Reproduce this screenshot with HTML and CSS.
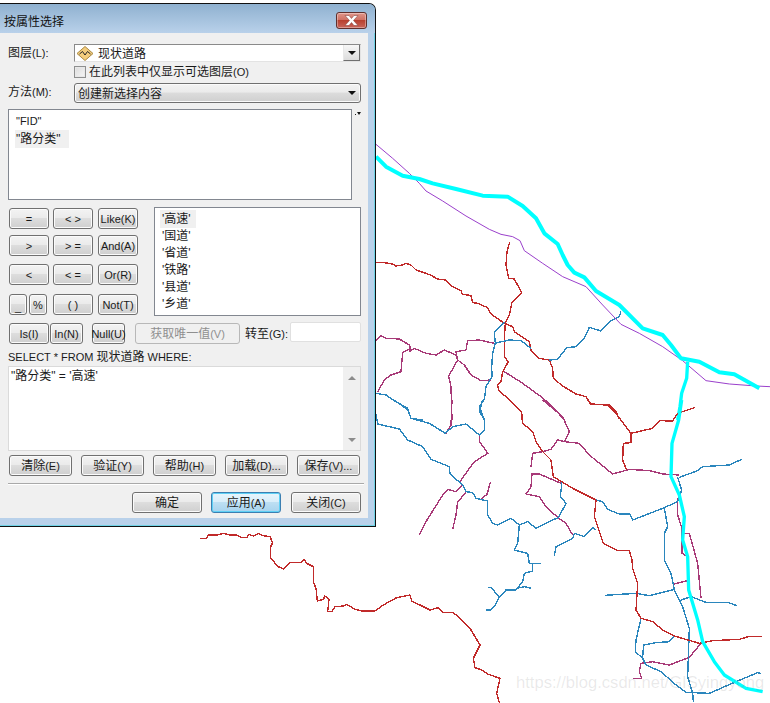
FILE: index.html
```html
<!DOCTYPE html>
<html lang="zh">
<head>
<meta charset="utf-8">
<title>按属性选择</title>
<link rel="stylesheet" href="styles.css">
</head>
<body>
<svg class="map" width="770" height="703" viewBox="0 0 770 703" xmlns="http://www.w3.org/2000/svg">
  <g transform="translate(376 130) scale(.33333)" fill="none" stroke-linejoin="round">
    <g class="red">
      <polyline points="0,398 20,397 50,402 60,408 80,405 90,400 105,405 120,420 150,430 165,436 185,447 210,450 225,468 255,482 258,492 285,497 290,518 305,520 335,533 345,552 385,580 410,590 415,605 460,635 465,660 488,685 520,690 530,715 532,745 560,768 600,792 630,800 645,822 700,825 720,845 730,868"/>
      <polyline points="401,337 393,365 390,405 398,445 415,447 437,488 407,520 400,555 388,580 385,625 385,680 397,695 380,725 375,755 365,765 368,780 405,815 437,848 437,870"/>
    </g>
    <g class="mag">
      <polyline points="0,632 15,618 30,625 70,627 100,645 105,660 100,665 115,655 150,670 180,675 205,660 240,675 245,690 265,705 285,735 315,752 345,750"/>
      <polyline points="105,655 80,668 75,725 45,735 25,750 5,785"/>
      <polyline points="245,690 240,665 270,660 275,632 310,630 355,640"/>
      <polyline points="245,690 218,738 225,770 228,870"/>
      <polyline points="385,725 440,760 495,800 530,830 565,870"/>
    </g>
    <g class="blue">
      <polyline points="385,575 355,608 358,640 350,670 347,710 348,740 330,770 325,808 310,830 325,870"/>
      <polyline points="355,640 400,630 435,632 465,655"/>
      <polyline points="520,690 545,688 572,653 600,650 625,625 640,592 675,603 700,575 730,560 735,545"/>
      <polyline points="0,790 30,795 60,815 95,835 105,865 140,870"/>
      <polyline points="0,855 0,870"/>
    </g>
    <polyline class="pur" points="0,43 50,85 100,130 130,160 150,183 200,213 270,258 340,298 375,313 410,320 432,332 445,362 500,400 560,440 630,470 680,525 735,583 790,610 860,650 920,692 990,752 1060,762 1140,768 1182,770"/>
    <polyline class="cyan" points="0,80 30,110 80,137 130,147 170,160 240,177 320,197 395,200 440,228 480,265 505,310 545,342 560,375 575,405 595,428 625,442 660,483 730,525 800,595 860,615 885,645 915,685 970,695 1030,727 1075,733 1150,775"/>
    <polyline class="cyan thin" points="935,695 932,745 917,790 912,830 905,870"/>
  </g>
  <g transform="translate(376 400) scale(.33333)" fill="none" stroke-linejoin="round">
    <g class="mag">
      <polyline points="228,0 225,75 210,100"/>
      <polyline points="500,0 560,50 580,95 565,125 545,120 525,148 500,155 470,160 465,200"/>
      <polyline points="565,125 610,130 640,165 710,222 760,208 820,212 860,222 910,225"/>
      <polyline points="555,250 490,222 468,222 465,260 450,282 490,290 510,320 548,355 570,370 590,405"/>
      <polyline points="310,105 310,125 336,160 295,185 250,247"/>
      <polyline points="260,255 240,275 215,268 200,285 150,365 130,405"/>
      <polyline points="343,247 333,283 315,297"/>
      <polyline points="270,278 245,305 240,345 230,388"/>
      <polyline points="905,295 905,345 918,385 918,460 935,470"/>
      <polyline points="925,400 940,400 965,490 975,595"/>
      <polyline points="893,552 935,542"/>
      <polyline points="975,730 940,772 880,795 830,785 795,790 790,815 797,835 770,835"/>
    </g>
    <g class="blue">
      <polyline points="320,0 310,35 326,60 325,90 310,105 270,72 230,80 208,100 160,70 105,55 95,30 55,0"/>
      <polyline points="0,42 5,72 70,87 95,120 140,140 165,178 220,200 222,222 260,255 270,275 290,278 300,295 335,303 335,345 350,370 365,375 405,355 430,375 455,365 480,385 520,365 548,352 570,310 553,290 558,245"/>
      <polyline points="430,375 425,430 415,450 455,460 460,490 495,490"/>
      <polyline points="470,490 470,513 445,520 440,545 420,570 390,570 370,592 345,562 335,562"/>
      <polyline points="370,592 355,620 345,630 330,630"/>
      <polyline points="420,565 445,560 465,565"/>
      <polyline points="535,468 540,440 590,415 595,400 625,410 650,382 660,390"/>
      <polyline points="660,300 680,305 695,328 730,342 762,342 770,360 860,325 905,305 917,270 905,232"/>
      <polyline points="910,232 965,212 980,200 1060,195 1097,178"/>
      <polyline points="865,325 875,380 865,400 865,480 885,520 895,570 920,620 940,685 935,830 950,880 952,905"/>
      <polyline points="687,586 780,580 820,587 895,568"/>
      <polyline points="910,602 945,590 990,607 1055,607 1082,617"/>
      <polyline points="795,655 780,720 778,755 800,775 810,795 855,815 900,855 930,877 1000,880 1080,845 1145,818 1155,820"/>
      <polyline points="800,770 803,735 840,728 880,725 895,708"/>
    </g>
    <g class="red">
      <polyline points="400,0 437,38 440,70 470,95 480,125 500,155 525,180 532,230 590,265 660,300 655,350 670,395 682,430 725,452 760,452 768,480 770,505 785,550 780,630 795,655 830,665 860,690 895,708 970,730 1010,722 1090,718 1120,709 1157,709"/>
      <polyline points="635,0 645,13 695,15 720,40 765,100 830,85 850,62 890,63 905,40 958,22"/>
      <polyline points="765,100 765,128 742,130 740,180 752,210"/>
    </g>
    <polyline class="cyan thin" points="917,0 908,60 888,130 885,230 910,285 925,350 920,420 935,470 938,570 965,660 980,725 1015,785 1045,825 1110,865 1160,875"/>
  </g>
  <g transform="translate(190 520) scale(.33333)" fill="none" stroke-linejoin="round">
    <polyline class="red-line" points="30,55 50,55 55,45 80,45 100,40 120,45 140,45 155,53 172,52 175,43 190,48 205,40 220,47 240,50 248,68 242,80 242,115 265,140 280,147 300,128 335,127 342,118 350,130 370,140 370,185 378,205 382,243 400,238 405,228 417,238 413,275 425,275 435,260 460,258 470,253 495,268 515,273 555,273 580,255 620,233 660,225 665,243 690,255 720,270 745,263 760,277 790,278 810,295 840,325 870,375 850,415 855,443 875,450 895,463 930,475 920,520 928,548"/>
  </g>
</svg>
<div class="watermark">https://blog.csdn.net/GISyingyong</div>

<div class="dialog">
  <div class="titlebar">
    <span class="title">按属性选择</span>
    <div class="close">
      <svg width="15" height="11" viewBox="0 0 15 11" xmlns="http://www.w3.org/2000/svg"><path class="close-x" d="M1 .5h4l2.500 3 2.500-3h4L9.500 5.500 14 10.500h-4l-2.500-3-2.500 3H1L5.500 5.500z"/></svg>
    </div>
  </div>
  <div class="client">
    <div class="row row-layer">
      <label class="lbl">图层<span class="lt">(L):</span></label>
      <div class="combo">
        <svg class="layer-icon" width="18" height="15" viewBox="0 0 18 15" xmlns="http://www.w3.org/2000/svg"><path class="li-fill" d="M9 .5 17 7.500 9 14.500 1 7.500z"/><path class="li-line" d="M3.500 8 6.500 5.500 9 9 11.500 5.500 14.500 8"/></svg>
        <span class="combo-text">现状道路</span>
        <span class="combo-btn"><i class="arrow"></i></span>
      </div>
    </div>
    <div class="row row-check">
      <span class="checkbox"></span>
      <span class="shift">在此列表中仅显示可选图层<span class="lt">(O)</span></span>
    </div>
    <div class="row row-method">
      <label class="lbl">方法<span class="lt">(M):</span></label>
      <div class="dropdown"><span class="shift2">创建新选择内容</span><i class="arrow"></i></div>
    </div>
    <div class="fields">
      <div class="listbox">
        <div class="item"><span class="lt">"FID"</span></div>
        <div class="item sel">"路分类"</div>
      </div>
      <div class="sort"><i class="sort-dot"></i><i class="arrow mini"></i></div>
    </div>
    <div class="row row-mid">
      <div class="ops">
        <button class="btn">=</button><button class="btn">&lt; &gt;</button><button class="btn">Like(K)</button>
        <button class="btn">&gt;</button><button class="btn">&gt; =</button><button class="btn">And(A)</button>
        <button class="btn">&lt;</button><button class="btn">&lt; =</button><button class="btn">Or(R)</button>
        <div class="pair"><button class="btn small under">_</button><button class="btn small">%</button></div><button class="btn">( )</button><button class="btn">Not(T)</button>
      </div>
      <div class="values">
        <div class="val sel">'高速'</div>
        <div class="val">'国道'</div>
        <div class="val">'省道'</div>
        <div class="val">'铁路'</div>
        <div class="val">'县道'</div>
        <div class="val">'乡道'</div>
      </div>
    </div>
    <div class="row row-is">
      <button class="btn w-is">Is(I)</button>
      <button class="btn w-in">In(N)</button>
      <button class="btn w-null">Null(U)</button>
      <button class="btn w-uniq" disabled><span class="cj">获取唯一值</span>(V)</button>
      <label class="goto">转至<span class="lt">(G):</span></label>
      <div class="goto-input"></div>
    </div>
    <div class="sql-label"><span class="lt">SELECT * FROM </span>现状道路<span class="lt"> WHERE:</span></div>
    <div class="sql">
      <div class="sql-text">"路分类" = '高速'</div>
      <div class="scroll"><i class="up"></i><i class="down"></i></div>
    </div>
    <div class="row row-tools">
      <button class="btn w-tool"><span class="cj">清除</span>(E)</button>
      <button class="btn w-tool"><span class="cj">验证</span>(Y)</button>
      <button class="btn w-tool"><span class="cj">帮助</span>(H)</button>
      <button class="btn w-tool"><span class="cj">加载</span>(D)...</button>
      <button class="btn w-tool"><span class="cj">保存</span>(V)...</button>
    </div>
    <div class="divider"></div>
    <div class="row row-actions">
      <button class="btn w-act"><span class="cj">确定</span></button>
      <button class="btn w-act default"><span class="cj">应用</span>(A)</button>
      <button class="btn w-act last"><span class="cj">关闭</span>(C)</button>
    </div>
  </div>
</div>
</body>
</html>
```
FILE: styles.css
```css
* { box-sizing: border-box; }
html, body { margin: 0; padding: 0; background: #fff; }
body {
  width: 770px; height: 703px; overflow: hidden; position: relative;
  font: 12px/14px "Liberation Sans", "Noto Sans CJK SC", sans-serif;
  color: #1a1a1a;
}
.lt { font-size: 11px; }
.cj { font-size: 12px; }
.map { position: absolute; left: 0; top: 0; shape-rendering: crispEdges; }
.red polyline, .red-line { stroke: #c12a2a; stroke-width: 4.2; }
.mag polyline { stroke: #a83a78; stroke-width: 4.2; }
.blue polyline { stroke: #2a86bd; stroke-width: 4.2; }
.pur { stroke: #9a3fcb; stroke-width: 3; }
.cyan { stroke: #00ffff; stroke-width: 12; shape-rendering: auto; }
.cyan.thin { stroke-width: 10; }
.watermark {
  position: absolute; left: 516px; top: 672px;
  font: 16.6px/22px "Liberation Sans", sans-serif;
  color: rgba(120, 120, 120, .16); white-space: nowrap;
}
.dialog {
  position: absolute; left: 0; top: 3px; width: 376px; height: 524px;
  border: 1px solid #111; border-left: 0; border-top-right-radius: 7px;
  background: #b9d1ea;
  box-shadow: inset -1px -1px 0 #6fd3e6;
  display: flex; flex-direction: column;
}
.titlebar {
  height: 29px; flex: none; display: flex; align-items: center; justify-content: space-between;
  padding: 6px 8px 0 4px;
  background: linear-gradient(#8fb1d0, #b9d1ea);
  border-top-right-radius: 6px;
}
.title { font-size: 12px; color: #111; margin-top: 1px; }
.close {
  width: 31px; height: 17px; border: 1px solid #5f2f2c; border-radius: 3px; margin-top: -3px;
  background: linear-gradient(#e0968a 0, #cf7164 45%, #b8402f 50%, #c9655a 100%);
  box-shadow: inset 0 0 0 1px rgba(255,255,255,.35);
  display: flex; align-items: center; justify-content: center;
}
.close-x { fill: #fff; stroke: #7a3a36; stroke-width: .5; }
.client {
  width: 368px; height: 485px; background: #f0f0f0; padding: 11px 0 0 8px; flex: none;
}
.row { display: flex; align-items: center; }
.lbl { width: 66px; flex: none; }
.row-layer { height: 18px; align-items: flex-start; }
.row-layer .lbl { margin-top: 2px; }
.combo {
  width: 287px; height: 18px; background: #fff; position: relative;
  border: 1px solid #8a8a8a; border-right-color: #e3e3e3; border-bottom-color: #e3e3e3;
  display: flex; align-items: center;
}
.layer-icon { margin-left: 1px; flex: none; }
.li-fill { fill: #f3cd7d; stroke: #a9873f; stroke-width: 1; }
.li-line { fill: none; stroke: #222; stroke-width: 1; }
.combo-text { margin-left: 4px; padding-top: 2px; }
.combo-btn {
  position: absolute; right: 0; top: 0; width: 17px; height: 16px;
  background: linear-gradient(#f7f7f7, #dcdcdc);
  border-left: 1px solid #e8e8e8; border-right: 1px solid #707070; border-bottom: 1px solid #707070;
  display: flex; align-items: center; justify-content: center;
}
.arrow {
  display: block; width: 0; height: 0;
  border-left: 4px solid transparent; border-right: 4px solid transparent; border-top: 4px solid #111;
}
.row-check { height: 12px; margin: 4px 0 0 66px; gap: 3px; }
.checkbox {
  width: 12px; height: 12px; border: 1px solid #8e8f8f; flex: none;
  background: linear-gradient(135deg, #dcdcdc, #f6f6f6);
  box-shadow: inset 0 0 0 1px #e8e8e8;
}
.row-method { height: 20px; margin-top: 5px; }
.row-method .lbl { margin-top: -2px; }
.dropdown {
  width: 287px; height: 20px; border: 1px solid #707070; border-radius: 3px;
  background: linear-gradient(#f3f3f3 0, #ebebeb 45%, #dcdcdc 50%, #cfcfcf 100%);
  box-shadow: inset 0 0 0 1px #fbfbfb;
  padding: 0 4px 0 3px; display: flex; align-items: center; justify-content: space-between;
}
.shift2 { padding-top: 2px; }
.fields { display: flex; margin-top: 6px; }
.listbox {
  width: 344px; height: 91px; background: #fff; border: 1px solid #828790; padding: 2px 0 0 6px;
}
.item { height: 18px; line-height: 18px; padding-left: 1px; width: 54px; }
.item.sel { background: #f0f0f0; }
.sort { margin: 2px 0 0 3px; display: flex; align-items: flex-start; }
.sort-dot { width: 1px; height: 1px; background: #222; margin-top: 3px; margin-right: 1px; }
.arrow.mini { border-left-width: 2px; border-right-width: 2px; border-top-width: 3px; margin-top: 1px; }
.row-mid { height: 109px; margin-top: 7px; align-items: flex-start; }
.ops {
  width: 146px; flex: none; padding: 1px 0 0 1px;
  display: grid; grid-template-columns: 44px 45px 40px; grid-template-rows: 27px 29px 30px 21px;
}
.btn {
  font: 11px/14px "Liberation Sans", "Noto Sans CJK SC", sans-serif;
  color: #1a1a1a; padding: 0; margin: 0; height: 21px; width: 40px; white-space: nowrap;
  border: 1px solid #707070; border-radius: 3px;
  background: linear-gradient(#f3f3f3 0, #ebebeb 45%, #dddddd 50%, #cfcfcf 100%);
  box-shadow: inset 0 0 0 1px #fbfbfb;
  display: flex; align-items: center; justify-content: center;
}
.pair { display: flex; gap: 2px; }
.btn.small { width: 18px; }
.under { align-items: flex-end; }
.values {
  width: 207px; height: 109px; background: #fff; border: 1px solid #828790; padding: 3px 0 0 5px;
}
.val { height: 17px; line-height: 17px; padding-left: 2px; width: 36px; }
.val.sel { background: #f0f0f0; margin-top: -1px; padding-top: 1px; height: 18px; }
.row-is { height: 22px; margin-top: 6px; align-items: flex-start; }
.w-is { margin: 1px 0 0 1px; width: 40px; }
.w-in { margin: 1px 0 0 1px; width: 33px; }
.w-null { margin: 1px 0 0 9px; width: 33px; }
.w-uniq {
  margin: 1px 0 0 10px; width: 105px; color: #8f8f8f;
  background: #f0f0f0; border-color: #b8b8b8; box-shadow: none;
}
.goto { margin: 5px 0 0 5px; width: 45px; flex: none; white-space: nowrap; }
.goto-input { width: 71px; height: 20px; background: #fff; border: 1px solid #e0e0e0; border-radius: 2px; }
.sql-label { height: 14px; margin-top: 6px; white-space: pre; }
.sql {
  width: 353px; height: 85px; margin-top: 2px; background: #fff; border: 1px solid #dadada;
  display: flex; justify-content: space-between;
}
.sql-text { padding: 2px 0 0 2px; }
.scroll {
  width: 17px; background: #f0f0f0; display: flex; flex-direction: column; justify-content: space-between;
  align-items: center; padding: 9px 0 8px;
}
.up, .down { display: block; width: 0; height: 0; border-left: 4px solid transparent; border-right: 4px solid transparent; }
.up { border-bottom: 4px solid #8c8c8c; }
.down { border-top: 4px solid #8c8c8c; }
.row-tools { height: 21px; margin: 4px 0 0 1px; gap: 9px; }
.row-tools .btn, .row-actions .btn, .w-uniq { padding-top: 1px; }
.w-tool { width: 63px; }
.divider { width: 356px; height: 2px; margin-top: 7px; background: #a9a9a9; border-bottom: 1px solid #fff; }
.row-actions { height: 21px; margin: 7px 0 0 124px; }
.w-act { width: 70px; margin-right: 9px; }
.w-act.last { margin: 0 0 0 1px; }
.default {
  border-color: #3c7fb1;
  background: linear-gradient(#e8f5fc 0, #d9eefa 45%, #bddff3 50%, #a7d3ee 100%);
  box-shadow: inset 0 0 0 1px #5fd0f5;
}
```
